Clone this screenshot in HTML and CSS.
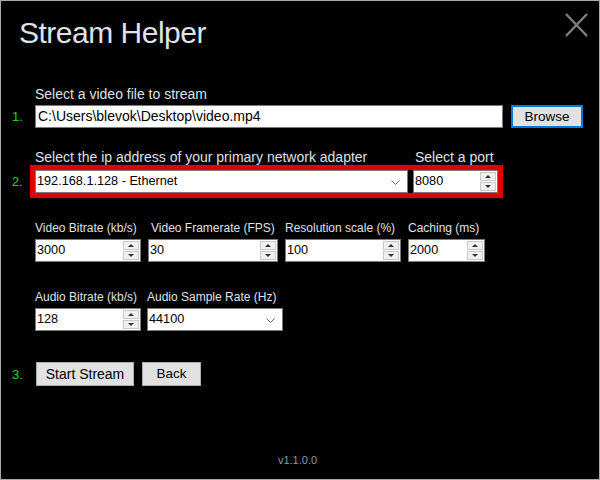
FILE: index.html
```html
<!DOCTYPE html>
<html lang="en">
<head>
    <meta charset="UTF-8">
    <meta name="viewport" content="width=device-width, initial-scale=1.0">
    <link rel="stylesheet" href="styles.css">
    <title>Stream Helper</title>
</head>
<body>
    <div class="window">
        <div class="title-bar">
            <div class="title">Stream Helper</div>
            <svg class="close" width="23" height="24" viewBox="0 0 23 24">
                <path d="M1 1 L22 23 M22 1 L1 23" stroke="#7f7f7f" stroke-width="2.4" fill="none"/>
            </svg>
        </div>

        <!-- 1. video file -->
        <div class="section section-file">
            <div class="label-row">
                <span class="label">Select a video file to stream</span>
            </div>
            <div class="control-row">
                <span class="step">1.</span>
                <div class="textbox textbox-file">C:\Users\blevok\Desktop\video.mp4</div>
                <button class="btn btn-default btn-browse">Browse</button>
            </div>
        </div>

        <!-- 2. network adapter + port -->
        <div class="section section-network">
            <div class="label-row">
                <span class="label label-adapter">Select the ip address of your primary network adapter</span>
                <span class="label">Select a port</span>
            </div>
            <div class="control-row">
                <span class="step">2.</span>
                <div class="highlight">
                    <div class="combo combo-adapter">
                        <span class="value">192.168.1.128 - Ethernet</span>
                        <svg class="chevron" width="9" height="6" viewBox="0 0 9 6"><path d="M0.5 0.5 L4.5 4.5 L8.5 0.5" stroke="#666" fill="none"/></svg>
                    </div>
                    <div class="numeric numeric-port">
                        <span class="value">8080</span>
                        <div class="spin"><span class="spin-up"></span><span class="spin-down"></span></div>
                    </div>
                </div>
            </div>
        </div>

        <!-- video settings -->
        <div class="section section-settings">
            <div class="field-row">
                <div class="field field-vbitrate">
                    <span class="label small">Video Bitrate (kb/s)</span>
                    <div class="numeric">
                        <span class="value">3000</span>
                        <div class="spin"><span class="spin-up"></span><span class="spin-down"></span></div>
                    </div>
                </div>
                <div class="field field-framerate">
                    <span class="label small label-shift">Video Framerate (FPS)</span>
                    <div class="numeric">
                        <span class="value">30</span>
                        <div class="spin"><span class="spin-up"></span><span class="spin-down"></span></div>
                    </div>
                </div>
                <div class="field field-scale">
                    <span class="label small">Resolution scale (%)</span>
                    <div class="numeric">
                        <span class="value">100</span>
                        <div class="spin"><span class="spin-up"></span><span class="spin-down"></span></div>
                    </div>
                </div>
                <div class="field field-caching">
                    <span class="label small">Caching (ms)</span>
                    <div class="numeric">
                        <span class="value">2000</span>
                        <div class="spin"><span class="spin-up"></span><span class="spin-down"></span></div>
                    </div>
                </div>
            </div>
        </div>

        <!-- audio settings -->
        <div class="section section-audio">
            <div class="field-row">
                <div class="field field-abitrate">
                    <span class="label small">Audio Bitrate (kb/s)</span>
                    <div class="numeric">
                        <span class="value">128</span>
                        <div class="spin"><span class="spin-up"></span><span class="spin-down"></span></div>
                    </div>
                </div>
                <div class="field field-samplerate">
                    <span class="label small">Audio Sample Rate (Hz)</span>
                    <div class="combo">
                        <span class="value">44100</span>
                        <svg class="chevron" width="9" height="6" viewBox="0 0 9 6"><path d="M0.5 0.5 L4.5 4.5 L8.5 0.5" stroke="#666" fill="none"/></svg>
                    </div>
                </div>
            </div>
        </div>

        <!-- 3. start -->
        <div class="section section-actions">
            <div class="control-row">
                <span class="step">3.</span>
                <button class="btn btn-start">Start Stream</button>
                <button class="btn btn-back">Back</button>
            </div>
        </div>

        <div class="version">v1.1.0.0</div>
    </div>
</body>
</html>
```

FILE: styles.css
```css
body {
    margin: 0;
    background-color: #000;
    font-family: "Liberation Sans", Arial, sans-serif;
}

.window {
    width: 600px;
    height: 480px;
    box-sizing: border-box;
    border: 1px solid #a9a9a9;
    background-color: #000;
    padding-left: 11px;
    display: flex;
    flex-direction: column;
}

.title-bar {
    height: 85px;
    box-sizing: border-box;
    padding: 12px 11px 0 7px;
    display: flex;
    justify-content: space-between;
    align-items: flex-start;
}

.title {
    margin-top: 3px;
    font-size: 30px;
    line-height: 34px;
    letter-spacing: -0.5px;
    color: #dfe2e8;
}

.close {
    display: block;
}

.label-row {
    display: flex;
    margin-left: 23px;
}

.label {
    font-size: 14px;
    line-height: 16px;
    color: #dfe2e8;
    white-space: nowrap;
}

.label.small {
    display: block;
    font-size: 12px;
    line-height: 14px;
}

.label-shift {
    padding-left: 3px;
}

.control-row {
    display: flex;
    align-items: center;
}

.step {
    width: 23px;
    flex-shrink: 0;
    font-size: 13px;
    color: #1ed81e;
}

/* boxes */
.textbox,
.combo,
.numeric {
    height: 23px;
    box-sizing: border-box;
    border: 1px solid #7a7a7a;
    background-color: #fff;
    color: #000;
    display: flex;
    align-items: center;
    position: relative;
}

.textbox {
    padding: 0 2px 1px;
    font-size: 14px;
}

.textbox-file {
    width: 468px;
}

.value {
    padding-left: 1px;
    padding-bottom: 2px;
    font-size: 12.7px;
}

.combo .chevron {
    position: absolute;
    right: 7px;
    top: 9px;
}

.numeric .spin {
    position: absolute;
    right: 1px;
    top: 1px;
    bottom: 1px;
    width: 16px;
    display: flex;
    flex-direction: column;
    gap: 1px;
}

.spin-up,
.spin-down {
    flex: 1;
    background-color: #f0f0f0;
    border: 1px solid #c8c8c8;
    display: flex;
    align-items: center;
    justify-content: center;
}

.spin-up::after {
    content: "";
    border-left: 3px solid transparent;
    border-right: 3px solid transparent;
    border-bottom: 3px solid #333;
}

.spin-down::after {
    content: "";
    border-left: 3px solid transparent;
    border-right: 3px solid transparent;
    border-top: 3px solid #333;
}

/* buttons */
.btn {
    height: 24px;
    box-sizing: border-box;
    padding: 0 0 1px;
    border: 1px solid #adadad;
    background-color: #e1e1e1;
    color: #000;
    font-family: "Liberation Sans", Arial, sans-serif;
    font-size: 13.5px;
}

.btn-default {
    border: 2px solid #0078d7;
}

.btn-browse {
    width: 72px;
    height: 23px;
    margin-left: 8px;
}

.btn-start {
    width: 98px;
    margin-left: 1px;
    font-size: 14px;
}

.btn-back {
    width: 59px;
    margin-left: 8px;
}

/* sections */
.section-file .control-row {
    margin-top: 3px;
}

.section-network {
    margin-top: 22px;
}

.section-network .label {
    line-height: 15px;
}

.label-adapter {
    width: 380px;
}

.highlight {
    margin-left: -5px;
    border: 5px solid #e00000;
    display: flex;
    gap: 5px;
}

.combo-adapter {
    width: 373px;
}

.numeric-port {
    width: 85px;
}

.field-row {
    display: flex;
    gap: 7px;
    margin-left: 23px;
}

.field .numeric,
.field .combo {
    margin-top: 4px;
}

.section-settings {
    margin-top: 23px;
}

.field-vbitrate,
.field-abitrate {
    width: 106px;
}

.field-framerate {
    width: 130px;
}

.field-scale {
    width: 116px;
}

.field-caching {
    width: 77px;
}

.field-samplerate {
    width: 136px;
}

.section-audio {
    margin-top: 28px;
}

.field-samplerate {
    margin-left: -1px;
}

.section-actions {
    margin-top: 31px;
}

.version {
    margin-top: auto;
    padding: 0 16px 12px 0;
    text-align: center;
    font-size: 11px;
    line-height: 13px;
    color: #8c9aa8;
}
```
